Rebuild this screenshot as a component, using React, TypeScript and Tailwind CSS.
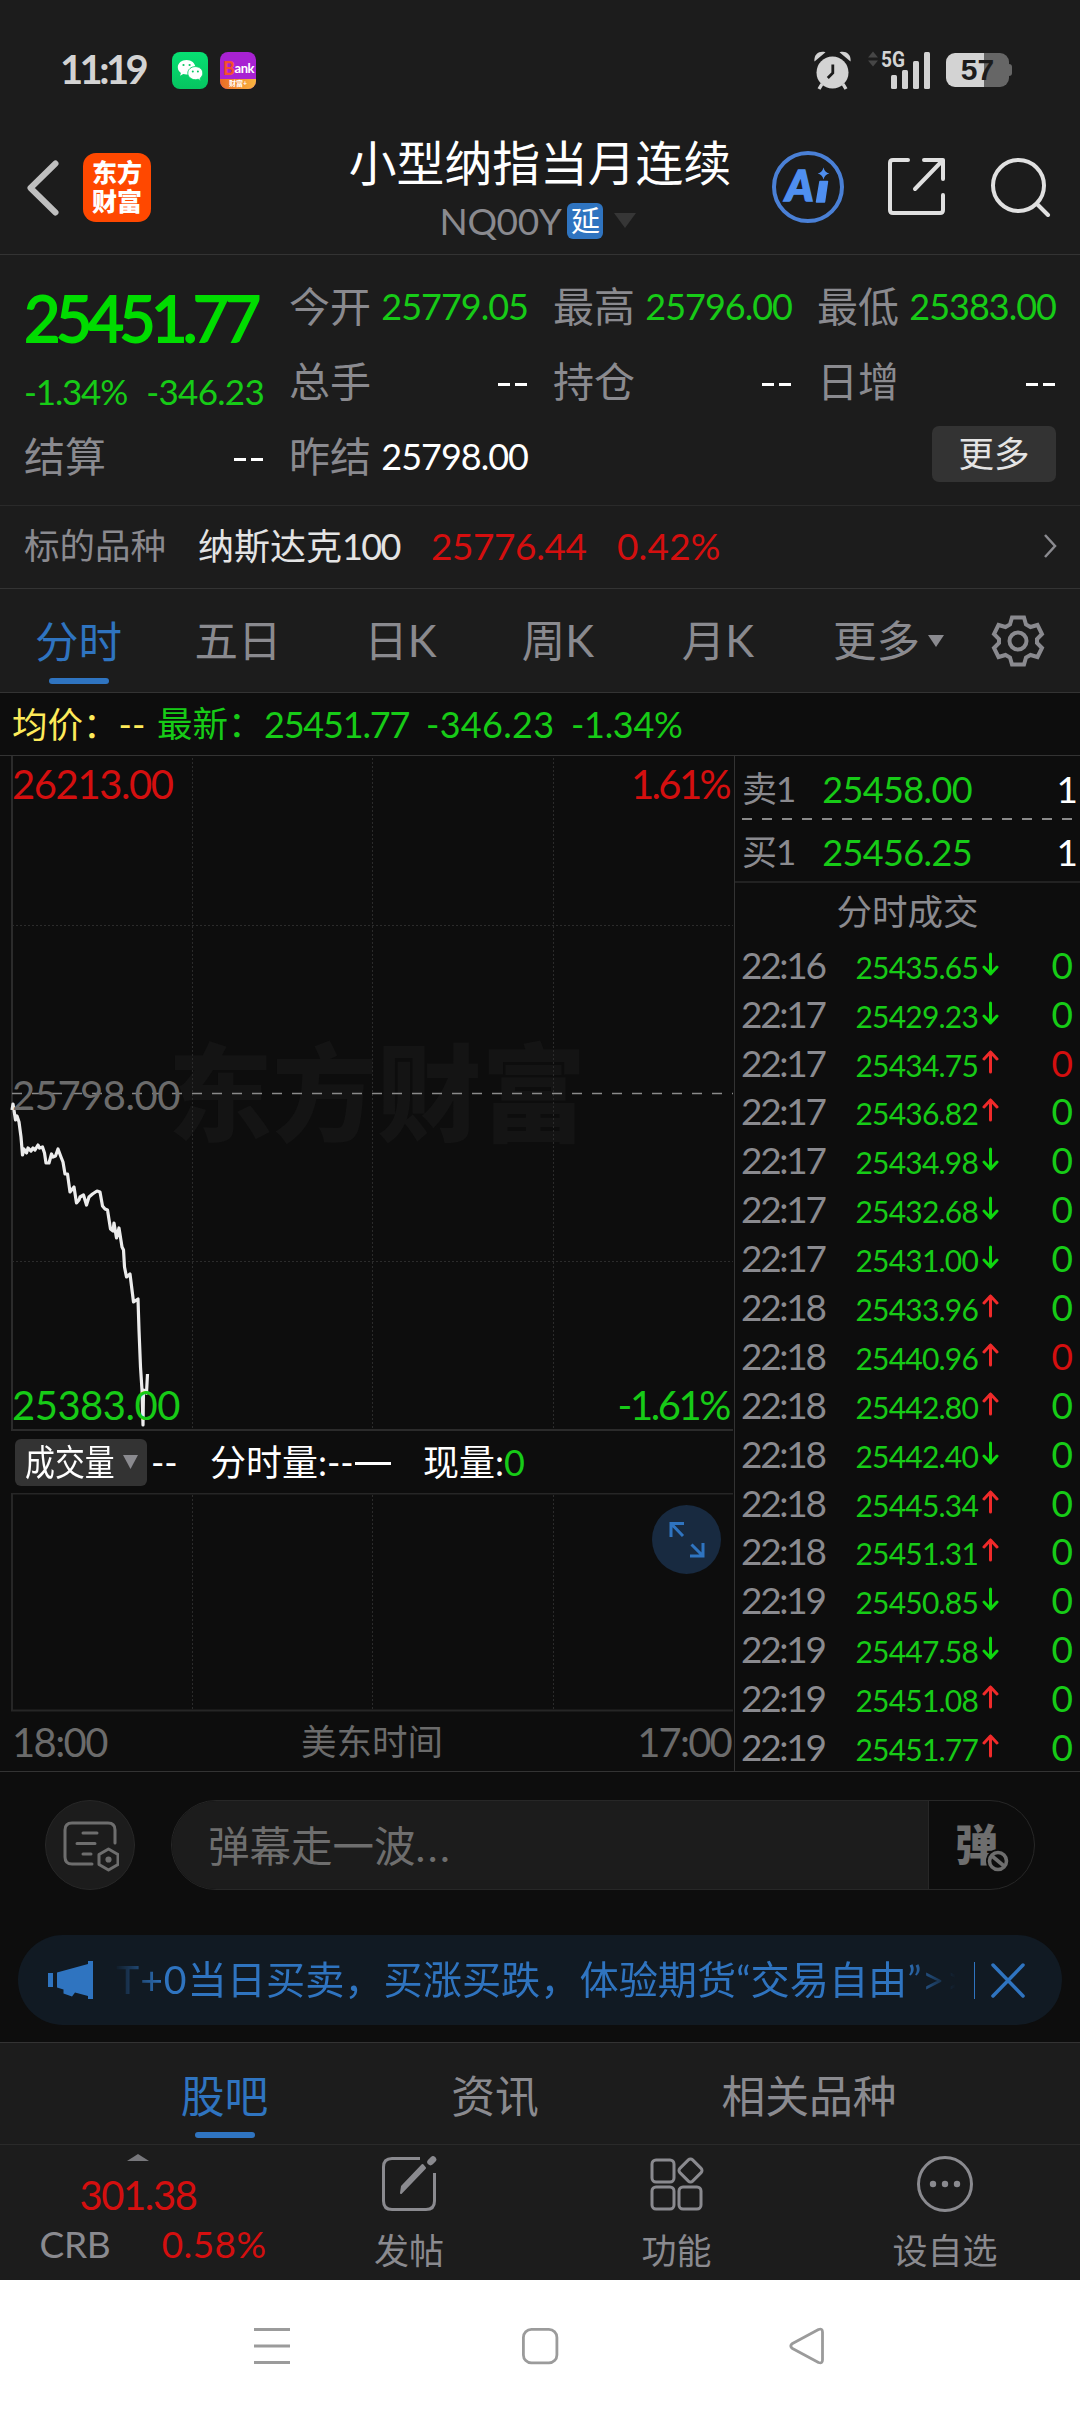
import React from "react";

type Quote = { label: string; value: string; tone?: string };

const GREEN = "text-[#17cb17]";

function Cell({ label, value, tone = "text-white" }: Quote) {
  const dash = value === "--";
  return (
    <div className="flex h-[75px] items-center justify-between">
      <span className="pb-[1px] text-[41px] text-[#8a8a8f]">{label}</span>
      {dash ? <Dashes /> : <span className={"pb-[2px] text-[36px] tracking-[-1px] " + tone}>{value}</span>}
    </div>
  );
}

function Dashes() {
  return (
    <span className="flex gap-[5px] pr-[1px] pt-[6px]">
      <i className="h-[3px] w-[12px] bg-white" />
      <i className="h-[3px] w-[12px] bg-white" />
    </span>
  );
}

function StatusBar() {
  return (
    <div className="flex h-[142px] items-center pb-[2px] pl-[60px] pr-[68px]">
      <span className="w-[112px] pb-[2px] text-[40px] font-bold tracking-[-3.600px] text-[#d3d3d3]">11:19</span>
      <svg width="36" height="37" viewBox="0 0 36 37">
        <defs>
          <linearGradient id="wx" x1="0" y1="0" x2="0" y2="1">
            <stop offset="0" stopColor="#07e073" />
            <stop offset="1" stopColor="#06c560" />
          </linearGradient>
        </defs>
        <rect width="36" height="37" rx="8" fill="url(#wx)" />
        <path d="M14.5 8C9.600 8 5.800 11.200 5.800 15.300c0 2.300 1.200 4.300 3.100 5.700l-.8 2.700 3.100-1.600c1 .3 2.100.5 3.300.5 4.900 0 8.800-3.200 8.800-7.300S19.400 8 14.500 8z" fill="#fff" />
        <path d="M23.300 14.600c-4.200 0-7.500 2.900-7.500 6.500s3.300 6.600 7.500 6.600c1 0 1.900-.2 2.800-.5l2.700 1.500-.7-2.400c1.600-1.200 2.700-3.100 2.700-5.200 0-3.600-3.300-6.500-7.500-6.500z" fill="#fff" stroke="#07d068" strokeWidth="0.900" />
        <g fill="#08c763">
          <circle cx="11.500" cy="13" r="1.100" /><circle cx="17.600" cy="13" r="1.100" />
          <circle cx="20.800" cy="19.500" r="1" /><circle cx="25.900" cy="19.500" r="1" />
        </g>
      </svg>
      <div className="relative ml-[12px] h-[37px] w-[36px] overflow-hidden rounded-[8px] bg-[#a822d2]">
        <div className="flex h-[33px] items-center justify-center pl-[1px] font-['Lato'] text-[13px] font-bold tracking-[-0.5px] text-white">
          <span className="text-[18px] font-black text-[#f4502c]">B</span>ank
        </div>
        <div className="absolute inset-x-0 bottom-0 flex h-[10px] items-center justify-center bg-gradient-to-r from-[#ea6b27] to-[#f8b540] text-[7px] font-bold text-white">财富+</div>
      </div>
      <div className="grow" />
      <svg width="37" height="39" viewBox="0 0 37 39" fill="#d3d3d3">
        <path d="M.5 10.500C-.5 3.500 5 -.8 11.500 1.200z" />
        <path d="M36.500 10.500C37.500 3.500 32 -.8 25.500 1.200z" />
        <path d="M8 33l-3 5M29 33l3 5" stroke="#d3d3d3" strokeWidth="3.400" />
        <circle cx="18.500" cy="21.500" r="16" />
        <path d="M18.800 13.500V22l-5 5" fill="none" stroke="#1c1c1c" strokeWidth="2.800" />
      </svg>
      <svg className="ml-[17px] overflow-visible" width="63" height="38" viewBox="0 0 63 38">
        <path d="M0 6.500L5 .5l5 6zM0 9.500l5 6 5-6z" fill="#464646" />
        <g fill="#d3d3d3">
          <rect x="23" y="24" width="6" height="14" rx="1.500" />
          <rect x="34" y="19" width="6" height="19" rx="1.500" />
          <rect x="45" y="10" width="6" height="28" rx="1.500" />
          <rect x="56" y="1" width="6" height="37" rx="1.500" />
        </g>
        <text x="13" y="16" textLength="24" lengthAdjust="spacingAndGlyphs" fontFamily="Roboto" fontWeight="700" fontSize="22" fill="#d3d3d3">5G</text>
      </svg>
      <div className="ml-[15px] flex items-center">
        <div className="flex h-[34px] w-[63px] items-center justify-center rounded-[9px] bg-[linear-gradient(90deg,#d3d3d3_60%,#666_60%)] font-['Liberation_Sans'] text-[30px] font-bold text-[#1c1c1c]">57</div>
        <i className="h-[12px] w-[3px] rounded-r-[3px] bg-[#666]" />
      </div>
    </div>
  );
}

function Header() {
  return (
    <div className="flex h-[112px] items-start">
      <div className="flex w-[348px] items-center pl-[26px] pt-[11px]">
        <svg width="34" height="68" viewBox="0 0 34 68">
          <path d="M29.500 9.500L4.500 34l25 24.500" fill="none" stroke="#bfbfbf" strokeWidth="6" strokeLinecap="round" strokeLinejoin="round" />
        </svg>
        <div className="ml-[23px] flex h-[69px] w-[68px] flex-col items-center justify-center rounded-[13px] bg-[#ff4800] pb-[2px] text-[25px] font-black leading-[29px] text-white">
          <span>东方</span>
          <span>财富</span>
        </div>
      </div>
      <div className="flex w-[384px] flex-col items-center">
        <h1 className="-mt-[1px] text-[47.8px] leading-[44px] text-white">小型纳指当月连续</h1>
        <div className="mt-[17px] flex h-[37px] items-center pr-[4px]">
          <span className="text-[37px] tracking-[-0.4px] text-[#8a8a8f]">NQ00Y</span>
          <span className="ml-[6px] flex h-[36px] w-[36px] items-center justify-center rounded-[6px] bg-[#2f74c0] text-[29px] text-white">延</span>
          <svg className="ml-[11px]" width="22" height="15"><path d="M0 0h22L11 15z" fill="#363636" /></svg>
        </div>
      </div>
      <div className="flex grow items-center pl-[40px] pt-[9px]">
        <svg width="72" height="72" viewBox="0 0 72 72" fill="#4f8ff0">
          <circle cx="36" cy="36" r="34" fill="none" stroke="#4a80d6" strokeWidth="4" />
          <text x="13.500" y="49.500" textLength="28" lengthAdjust="spacingAndGlyphs" fontFamily="Lato" fontStyle="italic" fontWeight="900" fontSize="42" stroke="#4f8ff0" strokeWidth="1.500">A</text>
          <path d="M48 30.500h7.500L52.500 51H44.500z" stroke="#4f8ff0" strokeWidth="1.500" strokeLinejoin="round" />
          <path d="M51.500 16.500q1.200 4.800 5.800 6-4.600 1.200-5.800 6-1.200-4.800-5.800-6 4.600-1.200 5.800-6z" />
        </svg>
        <svg className="ml-[43px]" width="60" height="60" viewBox="0 0 60 60" fill="none" stroke="#e0e0e0" strokeWidth="4" strokeLinecap="round" strokeLinejoin="round">
          <path d="M21 3H6Q3 3 3 6V53q0 3 3 3H53q3 0 3-3V38M37 3H56V22M56 3L28 32" />
        </svg>
        <svg className="ml-[44px]" width="60" height="60" viewBox="0 0 60 60" fill="none" stroke="#e0e0e0" strokeWidth="4" strokeLinecap="round">
          <circle cx="27.500" cy="28.500" r="25.500" />
          <path d="M46 47l11 11" />
        </svg>
      </div>
    </div>
  );
}

function Quotes() {
  return (
    <section className="h-[251px] border-b border-[#2a2a2a] pl-[24px] pr-[23px] pt-[14px]">
      <div className="flex">
        <div className="w-[240px]">
          <div className="flex h-[100px] items-center pb-[4px] text-[63px] tracking-[-4.800px] text-[#00dc00] [-webkit-text-stroke:1.800px_#00dc00]">25451.77</div>
          <div className={"flex h-[50px] items-center justify-between pb-[5px] text-[35px] tracking-[-1.2px] " + GREEN}>
            <span>-1.34%</span>
            <span className="tracking-[-0.7px]">-346.23</span>
          </div>
          <Cell label="结算" value="--" />
        </div>
        <div className="ml-[25px] w-[239px]">
          <Cell label="今开" value="25779.05" tone={GREEN} />
          <Cell label="总手" value="--" />
          <Cell label="昨结" value="25798.00" />
        </div>
        <div className="ml-[25px] w-[239px]">
          <Cell label="最高" value="25796.00" tone={GREEN} />
          <Cell label="持仓" value="--" />
        </div>
        <div className="ml-[25px] w-[239px]">
          <Cell label="最低" value="25383.00" tone={GREEN} />
          <Cell label="日增" value="--" />
          <div className="flex h-[70px] items-center justify-end">
            <span className="flex h-[56px] w-[124px] items-center justify-center rounded-[7px] bg-[#333] text-[35.5px] text-[#e4e4e4]">更多</span>
          </div>
        </div>
      </div>
    </section>
  );
}

function Underlying() {
  return (
    <section className="flex h-[83px] items-center border-b border-[#333] pb-[3px] pl-[24px] pr-[23px]">
      <span className="text-[35.500px] text-[#8a8a8f]">标的品种</span>
      <span className="ml-[32px] text-[36px] text-[#e4e4e4]">纳斯达克<span className="tracking-[-1.6px]">100</span></span>
      <span className="ml-[31px] w-[156px] text-[37px] tracking-[-0.4px] text-[#d40f0f]">25776.44</span>
      <span className="ml-[30px] text-[37px] tracking-[0.2px] text-[#d40f0f]">0.42%</span>
      <svg className="ml-auto" width="14" height="26"><path d="M2 2l10 11L2 24" fill="none" stroke="#8a8a8f" strokeWidth="2.500" /></svg>
    </section>
  );
}

function PeriodTabs() {
  return (
    <nav className="flex h-[104px] items-center border-b border-[#333] text-[43.500px] text-[#8a8a8f]">
      <div className="flex h-full w-[157px] flex-col items-center justify-end pb-[8px] text-[#2f74c0]">
        <span className="mb-[15px]">分时</span>
        <i className="h-[6px] w-[60px] rounded-full bg-[#2f74c0]" />
      </div>
      <span className="w-[162px] text-center">五日</span>
      <span className="w-[163px] text-center">日K</span>
      <span className="w-[152px] text-center">周K</span>
      <span className="w-[168px] text-center">月K</span>
      <span className="ml-[31px]">更多</span>
      <svg className="ml-[8px]" width="16" height="12"><path d="M0 0h16L8 12z" fill="#8a8a8f" /></svg>
      <svg className="ml-[47px]" width="54" height="54" viewBox="-27 -27 54 54" fill="none" stroke="#8a8a8f" strokeWidth="4">
        <path d="M-6 -23.500H6L8 -16.500L12.500 -14L19.500 -16L24 -7L19 -2V2L24 7L19.500 16L12.500 14L8 16.500L6 23.500H-6L-8 16.500L-12.500 14L-19.500 16L-24 7L-19 2V-2L-24 -7L-19.500 -16L-12.500 -14L-8 -16.500Z" />
        <circle r="8.500" />
      </svg>
    </nav>
  );
}

const PRICE_LINE =
  "12,354 13,348 15.5,364 17,360 19,366 21,381 22.5,399 24,393 26.5,397 28,392 31,395 33,392 35,394 38,389 39.5,392 42.5,391 44.5,397 46,407 49,407 51.5,398 53,401 55.5,400 58,393 61,401 63,406 65,418 67.5,418 70,436 74,431 76.5,447 79,444 80,441 83.5,439 86.5,449 89,441 92.5,438 97,435 100,436 102.5,450 105,453 107.5,454 110.5,473 113,475 114,467 116.5,482 119,472 122,491 123.5,494 124.5,511 126.5,521 130,518 133.5,546 138,543 139,574 140.5,611 142,634 143,669 143.5,634 146.5,637 147.5,618";

function PriceChart() {
  return (
    <div className="relative h-[676px]">
      <svg className="absolute inset-0" width="734" height="676">
        <text x="168" y="377" textLength="418" lengthAdjust="spacingAndGlyphs" fontFamily="Noto Sans CJK SC" fontWeight="900" fontSize="106" fill="#141414">东方财富</text>
        <g stroke="#2b2b2b" strokeDasharray="2 2" fill="none">
          <path d="M192.500 2V674M372.500 2V674M553.500 2V674M12 169.500H733M12 505.500H733" />
        </g>
        <path d="M12 0V674H733" fill="none" stroke="#2b2b2b" strokeWidth="2" />
        <path d="M12 337.500H733" stroke="#8a8a8a" strokeWidth="1.600" strokeDasharray="10 10" />
        <polyline points={PRICE_LINE} fill="none" stroke="#ececec" strokeWidth="3.200" strokeLinejoin="round" />
      </svg>
      <div className="relative flex h-full flex-col justify-between pb-[7px] pl-[12px] pr-[5px] pt-[8px] text-[40px] leading-[40px] tracking-[-0.5px]">
        <div className="flex justify-between text-[#d40f0f]"><span className="tracking-[-1.400px]">26213.00</span><span className="tracking-[-2.6px]">1.61%</span></div>
        <div className="text-[#6b6b6b]">25798.00</div>
        <div className={"flex justify-between " + GREEN}><span>25383.00</span><span className="tracking-[-2.4px]">-1.61%</span></div>
      </div>
    </div>
  );
}

function VolumePanel() {
  return (
    <div>
      <div className="flex h-[61px] items-center pb-[1px] pl-[15px] text-[36px] text-white">
        <span className="flex h-[47px] w-[132px] items-center rounded-[6px] bg-[#333] pl-[10px]">
          <span className="w-[92px] origin-left scale-x-[0.830] whitespace-nowrap">成交量</span>
          <svg className="ml-[6px]" width="15" height="14"><path d="M0 0h15L7.500 14z" fill="#8a8a8f" /></svg>
        </span>
        <span className="ml-[4px] w-[59px]">--</span>
        <span className="flex w-[213px] items-center whitespace-nowrap">分时量:--<i className="ml-[1px] mt-[3px] h-[3px] w-[36px] bg-white" /></span>
        <span>现量:<span className={GREEN}>0</span></span>
      </div>
      <div className="relative h-[219px]">
        <svg className="absolute inset-0" width="734" height="219">
          <path d="M192.500 2V217M372.500 2V217M553.500 2V217" stroke="#2b2b2b" strokeDasharray="2 2" />
          <path d="M733 .5H12V217.500H733" fill="none" stroke="#262626" strokeWidth="2" />
        </svg>
        <svg className="absolute right-[13px] top-[12px]" width="69" height="69" viewBox="0 0 69 69">
          <circle cx="34.500" cy="34.500" r="34.500" fill="#182a40" />
          <path d="M19 32V18.500H32M19 18.500L31 31M51 38V51H38M51 51L39.500 39.500" fill="none" stroke="#2f74c0" strokeWidth="3" />
        </svg>
      </div>
      <div className="flex h-[59px] items-center justify-between pl-[12px] pr-[3px] text-[40px] tracking-[-1.6px] text-[#6b6b6b]">
        <span>18:00</span>
        <span className="text-[35.500px] tracking-normal">美东时间</span>
        <span className="tracking-[-1.8px]">17:00</span>
      </div>
    </div>
  );
}

// time, price, price went up, volume shown in red
const TRADES: [string, string, boolean, boolean?][] = [
  ["22:16", "25435.65", false],
  ["22:17", "25429.23", false],
  ["22:17", "25434.75", true, true],
  ["22:17", "25436.82", true],
  ["22:17", "25434.98", false],
  ["22:17", "25432.68", false],
  ["22:17", "25431.00", false],
  ["22:18", "25433.96", true],
  ["22:18", "25440.96", true, true],
  ["22:18", "25442.80", true],
  ["22:18", "25442.40", false],
  ["22:18", "25445.34", true],
  ["22:18", "25451.31", true],
  ["22:19", "25450.85", false],
  ["22:19", "25447.58", false],
  ["22:19", "25451.08", true],
  ["22:19", "25451.77", true],
];

function OrderRow({ side, price }: { side: string; price: string }) {
  return (
    <div className="flex h-[61px] items-center pt-[2px]">
      <span className="w-[56px] whitespace-nowrap text-[35px] tracking-[-1px] text-[#8a8a8f]">{side}</span>
      <span className={"w-[174px] text-right text-[36px] tracking-[-0.6px] " + GREEN}>{price}</span>
      <span className="grow pr-[2px] text-right text-[37px] text-white">1</span>
    </div>
  );
}

function TradePanel() {
  return (
    <aside className="flex w-[346px] flex-col border-l border-[#333]">
      <div className="border-b-2 border-[#222] pl-[7px]">
        <div className="pt-[1px]"><OrderRow side="卖1" price="25458.00" /></div>
        <div className="h-[2px] w-[333px] bg-[repeating-linear-gradient(90deg,#8a8a8a_0_10px,transparent_10px_20px)]" />
        <OrderRow side="买1" price="25456.25" />
      </div>
      <div className="flex h-[60px] items-center justify-center text-[35.500px] text-[#8a8a8f]">分时成交</div>
      <div className="pl-[6px] pr-[7px]">
        {TRADES.map(([time, price, up, red], i) => (
          <div key={i} className="flex h-[48.900px] items-center">
            <span className="w-[96px] text-[37px] tracking-[-2.3px] text-[#8a8a8f]">{time}</span>
            <span className={"w-[141px] pt-[5px] text-right text-[30px] tracking-[-0.8px] " + GREEN}>{price}</span>
            <svg className="ml-[4px]" width="17" height="25" viewBox="0 0 17 25" fill="none" strokeWidth="3" strokeLinecap="round" strokeLinejoin="round" stroke={up ? "#f02a2a" : "#0fd60f"}>
              <path d={up ? "M8.500 22V2M2 9l6.500-7L15 9" : "M8.500 2v20M2 15l6.500 7L15 15"} />
            </svg>
            <span className={"grow text-right text-[37px] " + (red ? "text-[#d40f0f]" : GREEN)}>0</span>
          </div>
        ))}
      </div>
    </aside>
  );
}

function Danmaku() {
  return (
    <div className="flex h-[163px] items-start pl-[45px] pt-[28px]">
      <div className="flex h-[90px] w-[90px] items-center justify-center rounded-full border border-[#272727] bg-[#1c1c1c] pl-[2px] pt-[2px]">
        <svg width="56" height="52" viewBox="0 0 56 52" fill="none" stroke="#6e6e6e" strokeWidth="3" strokeLinecap="round">
          <path d="M52 23V10Q52 3 45 3H9Q2 3 2 10V37Q2 44 9 44H29" />
          <path d="M20 13H34M14 23.500H32M20 34H28" />
          <path d="M45.500 29L55 34.500V44.500L45.500 50L36 44.500V34.500Z" strokeLinejoin="round" />
          <circle cx="45.500" cy="39.500" r="1.600" fill="#6e6e6e" />
        </svg>
      </div>
      <div className="ml-[36px] flex h-[90px] w-[864px] overflow-hidden rounded-full border border-[#272727]">
        <div className="flex w-[757px] items-center border-r border-[#272727] bg-[#1c1c1c] pl-[36px] pt-[3px] text-[41.500px] text-[#6e6e6e]">弹幕走一波<span className="tracking-[2.400px]">...</span></div>
        <div className="flex items-center pb-[2px] pl-[26px]">
          <div className="relative text-[43px] font-black text-[#6e6e6e]">
            弹
            <svg className="absolute -bottom-[7px] -right-[12px]" width="24" height="24" viewBox="0 0 24 24">
              <circle cx="12" cy="12" r="12" fill="#0d0d0d" />
              <circle cx="12" cy="12" r="8.500" fill="none" stroke="#6e6e6e" strokeWidth="3.600" />
              <path d="M6 7l12 10" stroke="#6e6e6e" strokeWidth="3.600" />
            </svg>
          </div>
        </div>
      </div>
    </div>
  );
}

function Banner() {
  return (
    <div className="mx-[18px] flex h-[90px] items-center rounded-full bg-[#111a23] pl-[30px] text-[#2f74c0]">
      <svg width="46" height="40" viewBox="0 0 46 40" fill="#2f74c0">
        <rect x="0" y="13" width="5" height="14" />
        <path d="M9 12.500L40 4V1h5V39H40V36L27 32.500 24 36.500 15.500 33.500V29.500L9 27.500Z" />
      </svg>
      <div className="ml-[20px] flex h-[60px] w-[848px] items-center overflow-hidden whitespace-nowrap pb-[2px] text-[39.200px] [mask-image:linear-gradient(90deg,transparent,#000_50px,#000_790px,transparent_842px)]">
        <span className="w-[76px] pl-[2px] tracking-[1px]">T+0</span>
        <span>当日买卖，买涨买跌，体验期货</span>
        <span>“交易自由”</span>
        <span className="tracking-[2px]">&gt;&gt;</span>
      </div>
      <i className="ml-[12px] h-[37px] w-[1px] bg-[#2f74c0]" />
      <svg className="ml-[16px]" width="34" height="35"><path d="M2 2l30 31M32 2L2 33" stroke="#2f74c0" strokeWidth="3.500" strokeLinecap="round" /></svg>
    </div>
  );
}

function ContentTabs() {
  return (
    <nav className="mt-[17px] flex h-[103px] border-y border-b-[#2a2a2a] border-t-[#333] bg-[#1c1c1c] text-[43.800px] text-[#8a8a8f]">
      <div className="ml-[134px] flex w-[181px] flex-col items-center pt-[32px] text-[#2f74c0]">
        <span>股吧</span>
        <i className="mt-[13px] h-[6px] w-[60px] rounded-full bg-[#2f74c0]" />
      </div>
      <span className="w-[360px] pt-[32px] text-center">资讯</span>
      <span className="w-[268px] pt-[32px] text-center">相关品种</span>
    </nav>
  );
}

function ActionBar() {
  return (
    <footer className="flex h-[135px] bg-[#1c1c1c] text-[35px] text-[#8a8a8f]">
      <div className="flex w-[276px] flex-col items-center pt-[9px]">
        <svg width="22" height="7"><path d="M0 7L11 0l11 7z" fill="#77777b" /></svg>
        <span className="mt-[14px] text-[40px] tracking-[-1.400px] text-[#d40f0f]">301.38</span>
        <div className="ml-[30px] mt-[10px] flex w-[227px] justify-between text-[37px] tracking-[-0.3px]">
          <span>CRB</span>
          <span className="tracking-[0.400px] text-[#d40f0f]">0.58%</span>
        </div>
      </div>
      <div className="flex w-[266px] flex-col items-center pt-[11px]">
        <svg width="56" height="56" viewBox="0 0 56 56" fill="none" stroke="#8a8a8f" strokeWidth="3">
          <path d="M39 2.500H11Q2.500 2.500 2.500 11V45q0 8.500 8.500 8.500H45q8.500 0 8.500-8.500V17" />
          <path d="M44 12L20 37l1-6.500L41.500 9z" fill="#8a8a8f" strokeLinejoin="round" strokeWidth="2" />
          <path d="M49.500 6L52 3.500" strokeWidth="6.500" strokeLinecap="round" />
        </svg>
        <span className="mt-[21px]">发帖</span>
      </div>
      <div className="flex w-[269px] flex-col items-center pt-[11px]">
        <svg width="56" height="56" viewBox="0 0 56 56" fill="none" stroke="#8a8a8f" strokeWidth="3">
          <rect x="3" y="4" width="22" height="22" rx="4" />
          <rect x="3" y="31" width="22" height="22" rx="4" />
          <rect x="30" y="31" width="22" height="22" rx="4" />
          <rect x="32.500" y="5.500" width="18" height="18" rx="3" transform="rotate(45 41.500 14.500)" />
        </svg>
        <span className="mt-[21px]">功能</span>
      </div>
      <div className="flex w-[268px] flex-col items-center pt-[11px]">
        <svg width="56" height="56" viewBox="0 0 56 56" fill="#8a8a8f">
          <circle cx="28" cy="28" r="26.500" fill="none" stroke="#8a8a8f" strokeWidth="3" />
          <circle cx="16" cy="28" r="3.200" /><circle cx="28" cy="28" r="3.200" /><circle cx="40" cy="28" r="3.200" />
        </svg>
        <span className="mt-[21px]">设自选</span>
      </div>
    </footer>
  );
}

function SystemNav() {
  return (
    <div className="flex h-[132px] items-center gap-[230px] bg-white pl-[253px]">
      <svg width="38" height="38" viewBox="0 0 38 38" stroke="#9b9b9b" strokeWidth="3"><path d="M1 2.500H37M1 19H37M1 35.500H37" /></svg>
      <svg width="38" height="38" viewBox="0 0 38 38" fill="none" stroke="#9b9b9b" strokeWidth="2.800"><rect x="2.400" y="2.400" width="33.500" height="33.500" rx="8" /></svg>
      <svg width="38" height="38" viewBox="0 0 38 38" fill="none" stroke="#9b9b9b" strokeWidth="2.800" strokeLinejoin="round">
        <path d="M29.500 2.500L3.500 16.500Q0 19 3.500 21.500L29.500 35.500Q33.500 37 33.500 33V5Q33.500 1 29.500 2.500Z" />
      </svg>
    </div>
  );
}

export default function App() {
  return (
    <div className="h-[2412px] w-[1080px] overflow-hidden bg-[#0d0d0d] font-['Lato','Noto_Sans_CJK_SC',sans-serif] leading-none">
      <div className="bg-[#1c1c1c]">
        <div className="border-b border-[#333]">
          <StatusBar />
          <Header />
        </div>
        <Quotes />
        <Underlying />
        <PeriodTabs />
      </div>
      <div className="flex h-[63px] items-center border-b border-[#333] pl-[12px] text-[36px]">
        <span className="w-[145px] text-[#fdea5a]"><span className="text-[35.500px]">均价：</span>--</span>
        <span className={"w-[107px] whitespace-nowrap text-[35.500px] " + GREEN}>最新：</span>
        <span className={"w-[162px] tracking-[-1.2px] " + GREEN}>25451.77</span>
        <span className={"w-[145px] tracking-[0.3px] " + GREEN}>-346.23</span>
        <span className={"tracking-[-0.3px] " + GREEN}>-1.34%</span>
      </div>
      <div className="flex h-[1016px] border-b border-[#333]">
        <div className="w-[734px]">
          <PriceChart />
          <VolumePanel />
        </div>
        <TradePanel />
      </div>
      <Danmaku />
      <Banner />
      <ContentTabs />
      <ActionBar />
      <SystemNav />
    </div>
  );
}
